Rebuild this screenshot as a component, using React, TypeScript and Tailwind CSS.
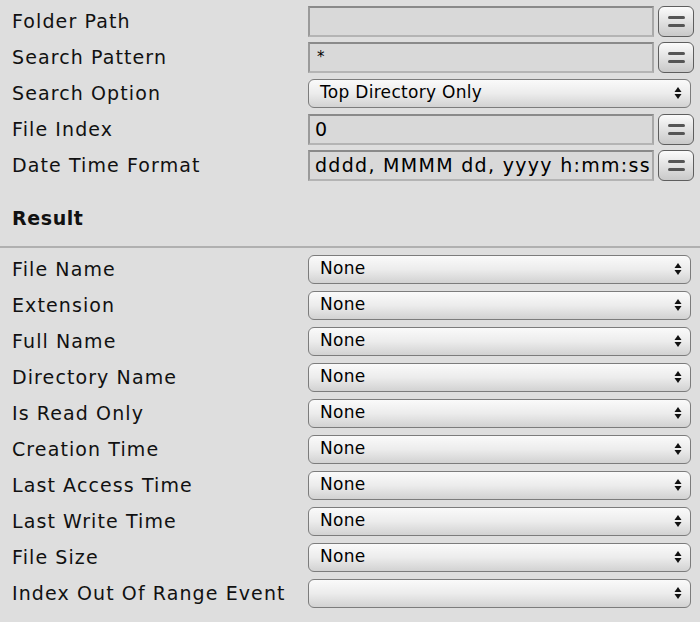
import React from "react";

const font = { fontFamily: '"DejaVu Sans", "Open Sans", sans-serif' };

function MenuButton() {
  return (
    <div className="ml-[4px] mr-[6px] flex h-[31px] w-[36px] shrink-0 flex-col items-center justify-center gap-[5px] rounded-[6px] border border-[#5e5e5e] bg-gradient-to-b from-[#fbfbfb] to-[#c9c9c9]">
      <div className="h-[3px] w-[17px] rounded-full bg-[#555]"></div>
      <div className="h-[3px] w-[17px] rounded-full bg-[#555]"></div>
    </div>
  );
}

function TextField({ value, big }: { value: string; big?: boolean }) {
  return (
    <div className="flex h-[31px] items-center">
      <div
        className={
          "flex h-[31px] min-w-0 flex-1 overflow-hidden whitespace-nowrap border-2 border-t-[#8a8a8a] border-l-[#9a9a9a] border-r-[#a8a8a8] border-b-[#b4b4b4] bg-[#d9d9d9] text-black " +
          (big ? "items-center pl-[5px] text-[19px] tracking-[1.3px]" : "items-start pl-[7px] pt-[2px] text-[15px]")
        }
      >
        {value}
      </div>
      <MenuButton />
    </div>
  );
}

function Arrows() {
  return (
    <svg width="8" height="14" viewBox="0 0 8 14">
      <path d="M4 1 L7.5 6 L0.5 6 Z" fill="#111" />
      <path d="M4 13 L7.5 8 L0.5 8 Z" fill="#111" />
    </svg>
  );
}

function Dropdown({ value }: { value: string }) {
  return (
    <div className="mr-[9px] flex h-[29px] items-center justify-between rounded-[6px] border border-[#7c7c7c] bg-gradient-to-b from-[#fafafa] via-[#ececec] to-[#d2d2d2] pl-[11px] pr-[8px] text-[17px] tracking-[0.3px] text-black">
      <span>{value}</span>
      <Arrows />
    </div>
  );
}

function Row({ label, children }: { label: string; children: React.ReactNode }) {
  return (
    <div className="grid h-[36px] grid-cols-[308px_minmax(0,1fr)] items-center">
      <div className="whitespace-nowrap pl-[12px] text-[19px] tracking-[1.1px] text-[#111]">{label}</div>
      <div className="min-w-0">{children}</div>
    </div>
  );
}

const results = [
  "File Name",
  "Extension",
  "Full Name",
  "Directory Name",
  "Is Read Only",
  "Creation Time",
  "Last Access Time",
  "Last Write Time",
  "File Size",
];

export default function App() {
  return (
    <div className="h-[622px] w-[700px] overflow-hidden bg-[#dedede]" style={font}>
      <div className="pt-[3px]">
        <Row label="Folder Path">
          <TextField value="" />
        </Row>
        <Row label="Search Pattern">
          <TextField value="*" />
        </Row>
        <Row label="Search Option">
          <Dropdown value="Top Directory Only" />
        </Row>
        <Row label="File Index">
          <TextField value="0" big />
        </Row>
        <Row label="Date Time Format">
          <TextField value="dddd, MMMM dd, yyyy h:mm:ss tt" big />
        </Row>
      </div>
      <div className="flex h-[51px] items-end pb-[2px] pl-[12px] text-[19px] font-bold tracking-[0.6px] text-[#111]">Result</div>
      <div className="mt-[12px] h-[2px] bg-[#b0b0b0]"></div>
      <div className="pt-[3px]">
        {results.map((r) => (
          <Row key={r} label={r}>
            <Dropdown value="None" />
          </Row>
        ))}
        <Row label="Index Out Of Range Event">
          <Dropdown value="" />
        </Row>
      </div>
      <div className="mt-[11px] h-[3px] bg-[#bdbdbd]"></div>
    </div>
  );
}
